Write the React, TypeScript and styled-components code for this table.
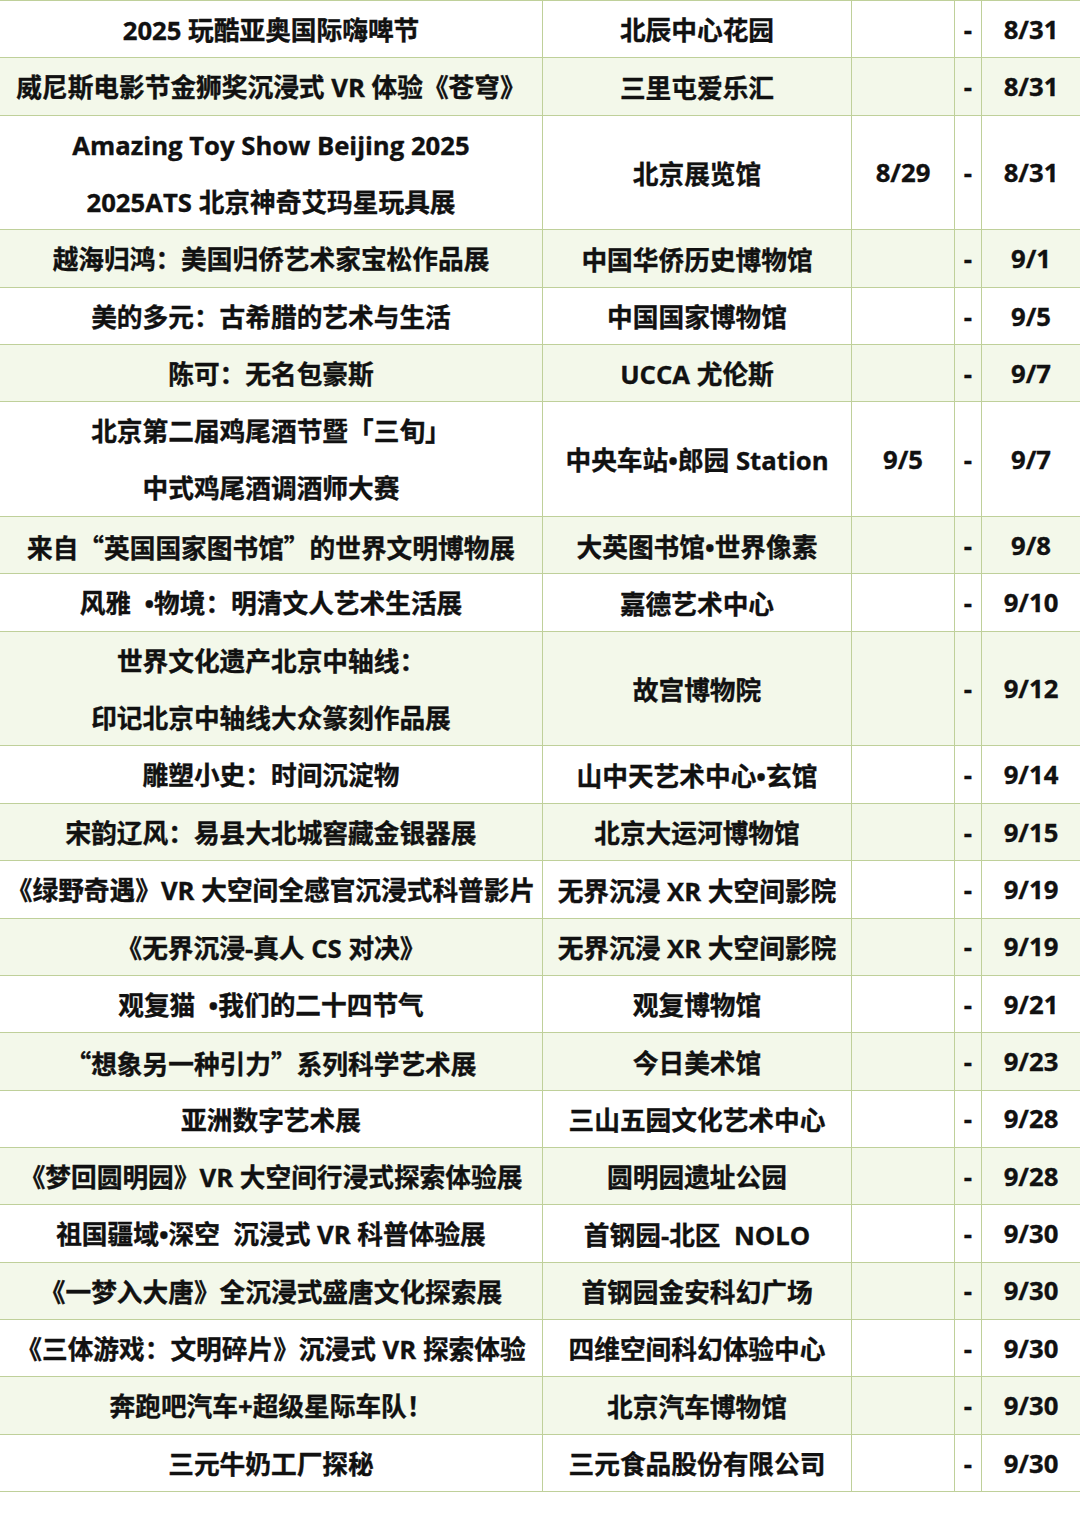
import React from "react";
import styled, { createGlobalStyle } from "styled-components";

const GlobalStyle = createGlobalStyle`
    html, body {
        margin: 0;
        padding: 0;
        background: #ffffff;
    }
`;

const LINE = 57.35;
const BORDER = "#bfd09a";

const Page = styled.div`
    width: 1080px;
    height: 1527px;
    background: #ffffff;
    overflow: hidden;
    font-family: "Open Sans", "Noto Sans CJK SC", sans-serif;
    font-weight: 700;
    font-size: 25.7px;
    color: #111111;
    -webkit-text-stroke: 0.35px #111111;
`;

const Table = styled.div`
    display: flex;
    flex-direction: column;
    border-top: 1px solid ${BORDER};
`;

const Row = styled.div<{ $shaded: boolean; $lines: number }>`
    box-sizing: border-box;
    display: grid;
    grid-template-columns: 543px 309px 103px 27px 98px;
    height: ${(p) => p.$lines * LINE}px;
    background: ${(p) => (p.$shaded ? "#f3f8ea" : "#ffffff")};
    border-bottom: 1px solid ${BORDER};
`;

const Cell = styled.div<{ $last?: boolean }>`
    box-sizing: border-box;
    display: flex;
    flex-direction: column;
    align-items: center;
    justify-content: center;
    white-space: pre;
    border-right: ${(p) => (p.$last ? "none" : `1px solid ${BORDER}`)};
`;

const Line = styled.div`
    box-sizing: border-box;
    height: ${LINE - 0.5}px;
    padding-top: 4px;
    line-height: ${LINE - 4.5}px;
`;

// full-width quotes come from the CJK face, like the original sheet
const Quote = styled.span`
    font-family: "Noto Sans CJK SC", sans-serif;
`;

type Event = {
    name: string[];
    venue: string;
    start?: string;
    end: string;
};

const events: Event[] = [
    { name: ["2025 玩酷亚奥国际嗨啤节"], venue: "北辰中心花园", end: "8/31" },
    { name: ["威尼斯电影节金狮奖沉浸式 VR 体验《苍穹》"], venue: "三里屯爱乐汇", end: "8/31" },
    { name: ["Amazing Toy Show Beijing 2025", "2025ATS 北京神奇艾玛星玩具展"], venue: "北京展览馆", start: "8/29", end: "8/31" },
    { name: ["越海归鸿：美国归侨艺术家宝松作品展"], venue: "中国华侨历史博物馆", end: "9/1" },
    { name: ["美的多元：古希腊的艺术与生活"], venue: "中国国家博物馆", end: "9/5" },
    { name: ["陈可：无名包豪斯"], venue: "UCCA 尤伦斯", end: "9/7" },
    { name: ["北京第二届鸡尾酒节暨「三旬」", "中式鸡尾酒调酒师大赛"], venue: "中央车站•郎园 Station", start: "9/5", end: "9/7" },
    { name: ["来自“英国国家图书馆”的世界文明博物展"], venue: "大英图书馆•世界像素", end: "9/8" },
    { name: ["风雅  •物境：明清文人艺术生活展"], venue: "嘉德艺术中心", end: "9/10" },
    { name: ["世界文化遗产北京中轴线：", "印记北京中轴线大众篆刻作品展"], venue: "故宫博物院", end: "9/12" },
    { name: ["雕塑小史：时间沉淀物"], venue: "山中天艺术中心•玄馆", end: "9/14" },
    { name: ["宋韵辽风：易县大北城窖藏金银器展"], venue: "北京大运河博物馆", end: "9/15" },
    { name: ["《绿野奇遇》VR 大空间全感官沉浸式科普影片"], venue: "无界沉浸 XR 大空间影院", end: "9/19" },
    { name: ["《无界沉浸-真人 CS 对决》"], venue: "无界沉浸 XR 大空间影院", end: "9/19" },
    { name: ["观复猫  •我们的二十四节气"], venue: "观复博物馆", end: "9/21" },
    { name: ["“想象另一种引力”系列科学艺术展"], venue: "今日美术馆", end: "9/23" },
    { name: ["亚洲数字艺术展"], venue: "三山五园文化艺术中心", end: "9/28" },
    { name: ["《梦回圆明园》VR 大空间行浸式探索体验展"], venue: "圆明园遗址公园", end: "9/28" },
    { name: ["祖国疆域•深空  沉浸式 VR 科普体验展"], venue: "首钢园-北区  NOLO", end: "9/30" },
    { name: ["《一梦入大唐》全沉浸式盛唐文化探索展"], venue: "首钢园金安科幻广场", end: "9/30" },
    { name: ["《三体游戏：文明碎片》沉浸式 VR 探索体验"], venue: "四维空间科幻体验中心", end: "9/30" },
    { name: ["奔跑吧汽车+超级星际车队！"], venue: "北京汽车博物馆", end: "9/30" },
    { name: ["三元牛奶工厂探秘"], venue: "三元食品股份有限公司", end: "9/30" },
];

const withQuotes = (text: string) =>
    text.split(/([“”])/).map((part, i) =>
        part === "“" || part === "”" ? <Quote key={i}>{part}</Quote> : part
    );

const App = () => {
    return (
        <Page>
            <GlobalStyle />
            <Table>
                {events.map((ev, i) => (
                    <Row key={i} $shaded={i % 2 === 1} $lines={ev.name.length}>
                        <Cell>
                            {ev.name.map((line, j) => (
                                <Line key={j}>{withQuotes(line)}</Line>
                            ))}
                        </Cell>
                        <Cell>{ev.venue}</Cell>
                        <Cell>{ev.start ?? ""}</Cell>
                        <Cell>-</Cell>
                        <Cell $last>{ev.end}</Cell>
                    </Row>
                ))}
            </Table>
        </Page>
    );
};

export default App;
